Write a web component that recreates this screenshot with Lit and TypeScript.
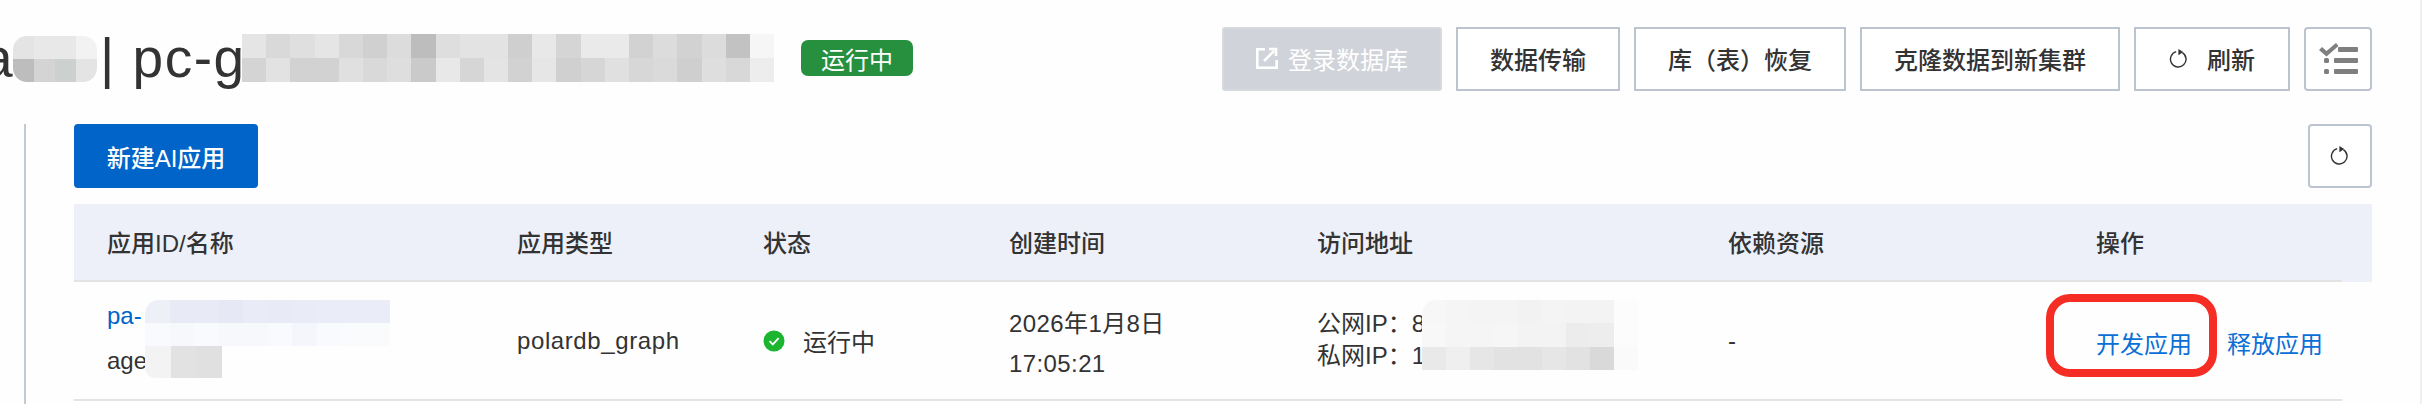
import { LitElement, html, css, svg } from "lit";
import { customElement } from "lit/decorators.js";

const g = (s: string) => s.split(" ").map((c) => "#" + c);

const titleMosaic = [
  g("e5e5e5 d9d9d9 dfdfdf e5e5e5 d8d8d8 d0d0d0 dcdcdc bdbdbd dedede e3e3e3 e3e3e3 cfcfcf e8e8e8 d5d5d5 eaeaea eaeaea d2d2d2 dcdcdc d2d2d2 dcdcdc c2c2c2 f6f6f6"),
  g("d4d4d4 e2e2e2 d2d2d2 d2d2d2 e0e0e0 d9d9d9 dedede cacaca e8e8e8 d6d6d6 e4e4e4 d2d2d2 e6e6e6 d0d0d0 d6d6d6 e0e0e0 d7d7d7 dadada cfcfcf dedede d8d8d8 ededed"),
];
const leftMosaic = [g("e4e4e4 e8e8e8 e8e8e8 f2f2f2"), g("bdbdbd d4d4d4 ccd0ce e4e4e4")];
const idMosaic = [
  g("eef0f8 e8ebf6 e8ebf6 e6e9f5 e9ecf6 e8ebf6 e9ecf6 eaecf7 eaecf7 eaecf7"),
  g("f9fafd f7f8fc f9fafd f7f8fc f7f8fc f9fafd f5f6fb f9fafd fafbfd fafbfd"),
];
const nameMosaic = [g("f3f3f3 e2e2e2 e0e0e0")];
const addrMosaic = [
  g("f7f7f7 f5f5f5 f4f4f4 f4f4f4 f2f2f2 f4f4f4 f3f3f3 f3f3f3 fcfcfc"),
  g("f8f8f8 f5f5f5 f5f5f5 f6f6f6 f3f3f3 f3f3f3 ececec ededed fcfcfc"),
  g("e9e9e9 efefef e6e6e6 e2e2e2 e2e2e2 e6e6e6 e2e2e2 d9d9d9 fafafa"),
];

const mosaic = (cls: string, rows: string[][]) => html`<div class="mosaic ${cls}">
  ${rows.map(
    (r) => html`<div class="mrow">${r.map((c) => html`<i class="cell" style="background:${c}"></i>`)}</div>`
  )}
</div>`;

const refresh = () => html`<svg class="ri" width="20" height="20" viewBox="0 0 20 20" fill="none">
  ${svg`<path d="M13.4 3.6A7.8 7.8 0 1 1 7.2 2.7" stroke="#333" stroke-width="1.4" fill="none"/>
  <path d="M9.4 0 14.2 3 9.4 6.2Z" fill="#333"/>`}
</svg>`;

@customElement("app-root")
export class AppRoot extends LitElement {
  static styles = css`
    :host {
      display: block;
      font-family: "Liberation Sans", "Noto Sans CJK SC", sans-serif;
      color: #333;
    }
    * { box-sizing: border-box; }
    .page {
      position: relative;
      width: 2422px;
      height: 404px;
      overflow: hidden;
      background: #fefefe;
      border-right: 2px solid #efefef;
      padding-top: 27px;
    }
    .top {
      display: flex;
      justify-content: space-between;
      align-items: center;
      height: 64px;
      padding-right: 48px;
    }
    .title-wrap { display: flex; align-items: center; }
    .title {
      display: flex;
      font-size: 55px;
      line-height: 62px;
      color: #333;
      width: 801px;
      height: 64px;
      white-space: pre;
      letter-spacing: 1.5px;
    }
    .pa { margin-left: -50px; width: 150px; }
    .tag {
      display: flex;
      align-items: center;
      justify-content: center;
      width: 112px;
      height: 36px;
      background: #26903f;
      color: #fff;
      font-size: 24px;
      border-radius: 7px;
      position: relative;
      top: -1px;
    }
    .actions { display: flex; gap: 14px; }
    .btn {
      display: flex;
      align-items: center;
      justify-content: center;
      gap: 8px;
      height: 64px;
      padding-bottom: 2px;
      border: 2px solid #bcc4cf;
      background: #fff;
      font-size: 24px;
      font-weight: 500;
      color: #333;
      white-space: nowrap;
    }
    .b-login { width: 220px; background: #d0d3d9; border-color: #d6d9de; color: #fff; border-radius: 3px; gap: 10px; font-weight: 400; }
    .b-trans { width: 164px; }
    .b-rest { width: 212px; }
    .b-clone { width: 260px; }
    .b-ref { width: 156px; gap: 18px; }
    .b-ref .ri { margin-top: 2px; }
    .b-list { width: 68px; border-radius: 4px; padding-bottom: 0; }
    .body {
      margin-left: 24px;
      margin-top: 33px;
      border-left: 2px solid #c3cad3;
      padding: 0 48px 0 48px;
      height: 280px;
    }
    .bar {
      display: flex;
      justify-content: space-between;
      margin-bottom: 16px;
    }
    .create {
      width: 184px;
      height: 64px;
      background: #0064c8;
      color: #fff;
      font-size: 24px;
      font-weight: 500;
      border-radius: 4px;
      display: flex;
      align-items: center;
      justify-content: center;
    }
    .b-small { width: 64px; height: 64px; border: 2px solid #bcc4cf; border-radius: 4px; display: flex; align-items: center; justify-content: center; background: #fff; }
    .thead { background: #edf0f9; height: 78px; }
    .grid {
      display: grid;
      grid-template-columns: 410px 246px 246px 308px 411px 368px 1fr;
      width: 2268px;
      padding-left: 33px;
      font-size: 24px;
    }
    .thead .grid {
      height: 78px;
      align-items: center;
      border-bottom: 2px solid #e3e3e3;
      font-weight: 500;
      padding-bottom: 2px;
    }
    .tbody .grid {
      height: 119px;
      align-items: center;
      border-bottom: 2px solid #e3e3e3;
      color: #333;
    }
    .name { display: flex; flex-direction: column; gap: 13px; line-height: 32px; margin-top: -4px; }
    .link { color: #0064c8; }
    .latin { letter-spacing: 0.6px; }
    .status { display: flex; align-items: center; gap: 18px; }
    .date { line-height: 40px; margin-top: 7px; letter-spacing: 0.4px; }
    .addr { line-height: 32px; margin-top: -2px; }
    .ops { display: flex; align-items: center; font-size: 24px; color: #0a6fd6; margin-top: 4px; }
    .sep { width: 2px; height: 30px; background: #e3e3e3; margin: 0 16px 0 17px; }
    .mosaic { position: absolute; overflow: hidden; display: flex; flex-direction: column; }
    .mrow { display: flex; flex: 1; }
    .cell { flex: 1; display: block; }
    .m-title { left: 242px; top: 34px; width: 532px; height: 48px; }
    .m-left { left: 13px; top: 36px; width: 84px; height: 46px; border-radius: 14px; }
    .m-id { left: 145px; top: 300px; width: 245px; height: 46px; border-top-left-radius: 14px; }
    .m-name { left: 145px; top: 346px; width: 77px; height: 32px; border-bottom-left-radius: 10px; }
    .m-addr { left: 1422px; top: 300px; width: 216px; height: 70px; border-top-left-radius: 14px; }
    .mark {
      position: absolute;
      left: 2046px;
      top: 294px;
      width: 171px;
      height: 83px;
      border: 8px solid #f52d24;
      border-radius: 24px;
    }
  `;

  render() {
    return html`<div class="page">
      <div class="top">
        <div class="title-wrap">
          <div class="title"><span class="pa">pa</span><span>| pc-g</span></div>
          <div class="tag">运行中</div>
        </div>
        <div class="actions">
          <div class="btn b-login">
            <svg width="22" height="22" viewBox="0 0 22 22" fill="none" stroke="#fff" stroke-width="2.6">
              <path d="M9 2.3H1.3V20.7H20.7V13" />
              <path d="M8 14 18 4" />
              <path d="M13 2H20V9" />
            </svg>
            登录数据库
          </div>
          <div class="btn b-trans">数据传输</div>
          <div class="btn b-rest">库（表）恢复</div>
          <div class="btn b-clone">克隆数据到新集群</div>
          <div class="btn b-ref">${refresh()}刷新</div>
          <div class="btn b-list">
            <svg width="40" height="36" viewBox="0 0 40 36" fill="#7f7f7f">
              <path d="M1 9 4 6 8.5 10 18 2 20.5 5 8.5 15.5Z" />
              <rect x="20" y="6" width="20" height="5" rx="1" />
              <rect x="6" y="17" width="5" height="5" rx="1.5" />
              <rect x="16" y="17" width="24" height="5" rx="1" />
              <rect x="6" y="28" width="5" height="5" rx="1.5" />
              <rect x="16" y="28" width="24" height="5" rx="1" />
            </svg>
          </div>
        </div>
      </div>
      <div class="body">
        <div class="bar">
          <div class="create">新建AI应用</div>
          <div class="b-small">${refresh()}</div>
        </div>
        <div class="thead">
          <div class="grid">
            <div>应用ID/名称</div>
            <div>应用类型</div>
            <div>状态</div>
            <div>创建时间</div>
            <div>访问地址</div>
            <div>依赖资源</div>
            <div>操作</div>
          </div>
        </div>
        <div class="tbody">
          <div class="grid">
            <div class="name"><span class="link">pa-</span><span>age</span></div>
            <div class="latin">polardb_graph</div>
            <div class="status">
              <svg width="22" height="22" viewBox="0 0 22 22">
                <circle cx="11" cy="11" r="10.5" fill="#1cb52f" />
                <path d="M6.5 11.2 9.8 14.4 15.6 8.2" fill="none" stroke="#fff" stroke-width="1.8" />
              </svg>
              <span>运行中</span>
            </div>
            <div class="date">2026年1月8日<br />17:05:21</div>
            <div class="addr">公网IP：8<br />私网IP：1</div>
            <div>-</div>
            <div class="ops"><span>开发应用</span><span class="sep"></span><span>释放应用</span></div>
          </div>
        </div>
      </div>
      ${mosaic("m-title", titleMosaic)} ${mosaic("m-left", leftMosaic)} ${mosaic("m-id", idMosaic)}
      ${mosaic("m-name", nameMosaic)} ${mosaic("m-addr", addrMosaic)}
      <div class="mark"></div>
    </div>`;
  }
}
